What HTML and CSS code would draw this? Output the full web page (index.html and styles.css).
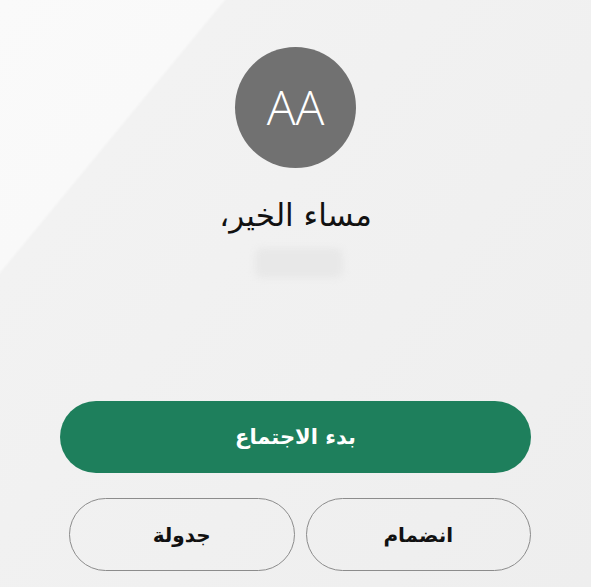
FILE: index.html
```html
<!DOCTYPE html>
<html lang="ar" dir="rtl">
<head>
<meta charset="utf-8">
<link rel="stylesheet" href="styles.css">
</head>
<body>
<main class="screen">
  <div class="avatar"><span class="initials">AA</span></div>
  <h1 class="greeting">مساء الخير،</h1>
  <div class="name-blur"></div>
  <div class="actions">
    <button class="btn btn-primary">بدء الاجتماع</button>
    <div class="row">
      <button class="btn btn-outline">انضمام</button>
      <button class="btn btn-outline">جدولة</button>
    </div>
  </div>
</main>
</body>
</html>
```

FILE: styles.css
```css
html, body {
  margin: 0;
  padding: 0;
}
body {
  width: 591px;
  height: 587px;
  overflow: hidden;
  background: linear-gradient(129.5deg, #fafafa 0px, #f9f9f9 172px, #f2f2f2 175px, #eeeeee 100%);
  font-family: "DejaVu Sans", sans-serif;
}
.screen {
  display: flex;
  flex-direction: column;
  align-items: center;
  padding-top: 47px;
}
.avatar {
  width: 121px;
  height: 121px;
  border-radius: 50%;
  background: #717171;
  display: flex;
  align-items: center;
  justify-content: center;
}
.initials {
  direction: ltr;
  font-family: "Open Sans", sans-serif;
  font-weight: 300;
  font-size: 48px;
  color: #ffffff;
  line-height: 1;
  margin-top: -2px;
}
.greeting {
  margin: 24px 0 0 0;
  font-family: "DejaVu Sans", sans-serif;
  font-weight: normal;
  font-size: 31px;
  line-height: 46px;
  color: #111111;
}
.name-blur {
  width: 88px;
  height: 30px;
  margin-top: 10px;
  margin-left: 6px;
  background: #e8e8e8;
  border-radius: 8px;
  filter: blur(3px);
}
.actions {
  align-self: stretch;
  display: flex;
  flex-direction: column;
  margin-top: 123px;
  padding: 0 60px;
  gap: 25px;
}
.btn {
  font-family: "DejaVu Sans", sans-serif;
  font-weight: bold;
  border-radius: 999px;
  cursor: pointer;
}
.btn-primary {
  height: 72px;
  font-size: 21px;
  background: #1e7f5c;
  color: #ffffff;
  border: none;
}
.row {
  display: flex;
  gap: 11px;
  margin-left: 9px;
}
.btn-outline {
  flex: 1;
  height: 73px;
  font-size: 20px;
  background: transparent;
  color: #111111;
  border: 1.5px solid #8c8c8c;
}
```
